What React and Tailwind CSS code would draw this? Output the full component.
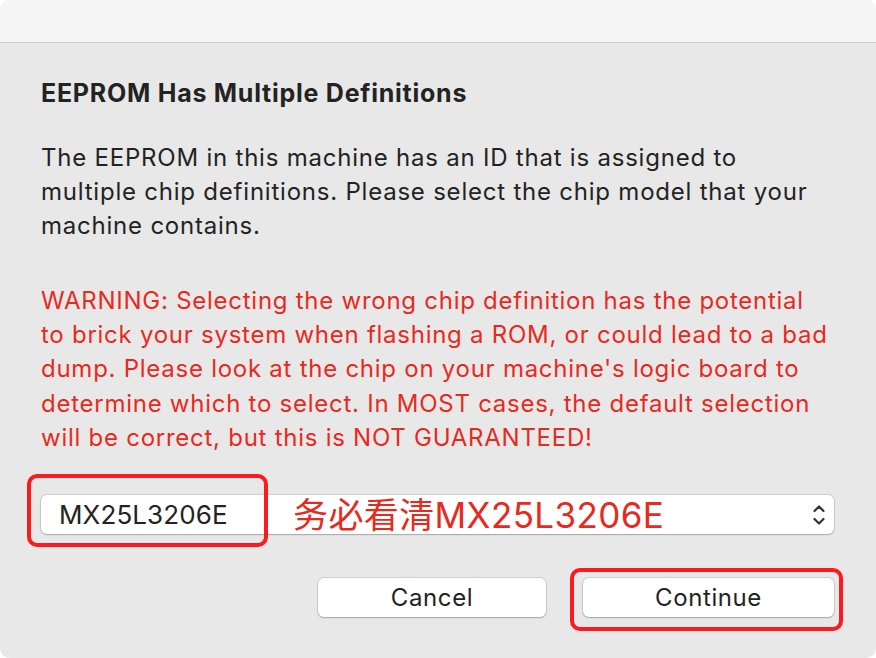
import React from 'react';

const btnShadow = 'shadow-[0_0_0_1px_rgba(0,0,0,0.1),0_1px_1.5px_rgba(0,0,0,0.2)]';

export default function App() {
  return (
    <div className="w-[876px] h-[658px] bg-white" style={{ fontFamily: 'Inter, "Noto Sans CJK SC", sans-serif' }}>
      <div className="relative w-full h-full rounded-[10px] overflow-hidden bg-[#e8e8e8] text-[#232323]">
        {/* title bar strip */}
        <div className="h-[43px] bg-[#f5f5f5] border-b border-[#cdcdcd]" />

        <div className="pl-[41px] pr-[42px]">
          <h1 className="mt-[35px] text-[25px] font-bold leading-[30px] tracking-[0.75px] whitespace-nowrap">
            EEPROM Has Multiple Definitions
          </h1>

          <p className="mt-[33px] text-[24px] leading-[34px] tracking-[0.78px] whitespace-nowrap">
            The EEPROM in this machine has an ID that is assigned to<br />
            multiple chip definitions. Please select the chip model that your<br />
            machine contains.
          </p>

          <p className="mt-[41px] text-[24px] leading-[34.2px] tracking-[0.74px] whitespace-nowrap text-[#e8291d]">
            WARNING: Selecting the wrong chip definition has the potential<br />
            to brick your system when flashing a ROM, or could lead to a bad<br />
            dump. Please look at the chip on your machine's logic board to<br />
            determine which to select. In MOST cases, the default selection<br />
            will be correct, but this is NOT GUARANTEED!
          </p>

          {/* popup button */}
          <div className={`mt-[40px] w-[793px] h-[39px] bg-white rounded-[6px] ${btnShadow} flex items-center pl-[18px] pr-[9px]`}>
            <span className="flex-1 text-[26px] leading-none tracking-[0.1px]">MX25L3206E</span>
            <svg width="12" height="24" viewBox="0 0 12 24" fill="none" stroke="#333" strokeWidth="2.2" strokeLinecap="round" strokeLinejoin="round">
              <path d="M1.5 8 L6 3.5 L10.5 8" />
              <path d="M1.5 16 L6 20.5 L10.5 16" />
            </svg>
          </div>

          {/* buttons */}
          <div className="mt-[44px] flex justify-end gap-[37px]">
            <button className={`w-[228px] h-[39px] bg-white rounded-[6px] ${btnShadow} text-[24px] leading-none tracking-[0.6px]`}>
              Cancel
            </button>
            <button className={`w-[251px] h-[39px] bg-white rounded-[6px] ${btnShadow} text-[24px] leading-none tracking-[0.6px]`}>
              Continue
            </button>
          </div>
        </div>

        {/* annotations */}
        <div className="absolute left-[27px] top-[474px] w-[241px] h-[73px] border-[4px] border-[#fb1a1e] rounded-[10px]" />
        <div className="absolute left-[293px] top-[494px] text-[35px] leading-[42px] tracking-[0.4px] text-[#e8291d] whitespace-nowrap">
          务必看清MX25L3206E
        </div>
        <div className="absolute left-[570px] top-[568px] w-[273px] h-[63px] border-[4px] border-[#fb1a1e] rounded-[10px]" />
      </div>
    </div>
  );
}
